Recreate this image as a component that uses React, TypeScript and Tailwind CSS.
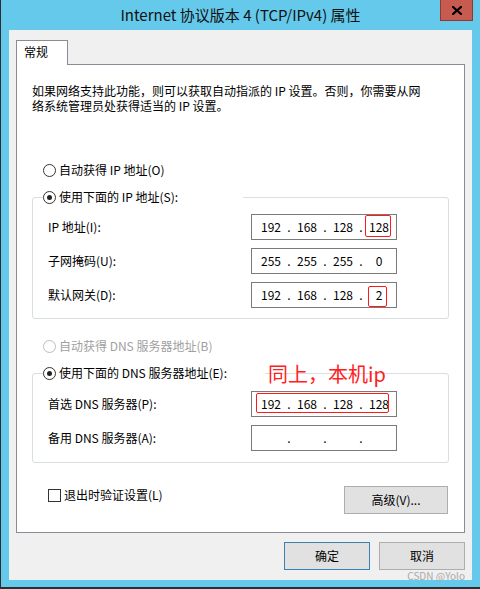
const FONT = { fontFamily: '"Noto Sans CJK SC", "Noto Sans", sans-serif' };

function Radio({ checked = false, disabled = false }: { checked?: boolean; disabled?: boolean }) {
  return (
    <span
      className={
        "w-[13px] h-[13px] rounded-full border bg-white flex items-center justify-center shrink-0 " +
        (disabled ? "border-[#bcbcbc]" : "border-[#333333]")
      }
    >
      {checked && <span className="w-[5px] h-[5px] rounded-full bg-[#222222]" />}
    </span>
  );
}

function RadioLabel({ text, checked, disabled }: { text: string; checked?: boolean; disabled?: boolean }) {
  return (
    <div className="flex items-center gap-[3px] h-[14px] text-[12px] leading-[14px]">
      <Radio checked={checked} disabled={disabled} />
      <span className={disabled ? "text-[#a0a0a0]" : "text-black"}>{text}</span>
    </div>
  );
}

function IpBox({ parts, children }: { parts: string[]; children?: React.ReactNode }) {
  return (
    <div className="relative w-[146px] h-[26px] border border-[#7a7a7a] bg-white flex items-center pl-[4px] text-[12px] leading-[14px]">
      {parts.map((p, i) => (
        <div key={i} className="flex items-center">
          {i > 0 && <span className="w-[6px] text-center">.</span>}
          <span className="w-[30px] text-center">{p}</span>
        </div>
      ))}
      {children}
    </div>
  );
}

function Row({ label, children }: { label: string; children: React.ReactNode }) {
  return (
    <>
      <div className="flex items-center text-[12px] leading-[14px]">{label}</div>
      {children}
    </>
  );
}

export default function App() {
  return (
    <div
      className="w-[480px] h-[589px] bg-[#64c9ea] border-l border-b-2 border-[#2e2e2e] flex flex-col text-black"
      style={FONT}
    >
      {/* title bar */}
      <div className="h-[30px] grid grid-cols-[1fr_auto_1fr] items-start">
        <div />
        <div className="text-[15px] leading-[30px] text-[#111]">Internet 协议版本 4 (TCP/IPv4) 属性</div>
        <div className="flex justify-end pr-[7px]">
          <div className="w-[33px] h-[21px] bg-[#c75b50] border border-[#8a3a33] border-t-0 flex items-center justify-center">
            <svg width="10" height="9" viewBox="0 0 10 9">
              <path d="M1 1 L9 8 M9 1 L1 8" stroke="#000" strokeWidth="2.2" strokeLinecap="square" />
            </svg>
          </div>
        </div>
      </div>

      {/* client */}
      <div className="ml-[8px] w-[463px] h-[550px] bg-[#f0f0f0] px-[7px] pt-[10px] flex flex-col">
        <div className="relative z-10 -mb-px w-[52px] h-[25px] bg-white border border-b-0 border-[#898c95] pl-[7px] pt-[3px] text-[12px] leading-[15px]">
          常规
        </div>

        <div className="relative bg-white border border-[#898c95] px-[15px] pb-[18px] flex flex-col">
          <div className="mt-[18px] text-[12px] leading-[15px]">
            <div>如果网络支持此功能，则可以获取自动指派的 IP 设置。否则，你需要从网</div>
            <div>络系统管理员处获得适当的 IP 设置。</div>
          </div>

          <div className="mt-[50px] pl-[11px]">
            <RadioLabel text="自动获得 IP 地址(O)" />
          </div>

          <fieldset className="mt-[13px] border border-[#d9dee3] rounded-[3px] pl-[10px] pt-[10px] pb-[10px]">
            <legend className="w-[200px] h-[14px]">
              <RadioLabel text="使用下面的 IP 地址(S):" checked />
            </legend>
            <div className="ml-[5px] grid grid-cols-[203px_146px] gap-y-[8px]">
              <Row label="IP 地址(I):">
                <IpBox parts={["192", "168", "128", "128"]}>
                  <div className="absolute left-[113px] top-0 w-[26px] h-[22px] border border-[#ff1a1a] rounded-[2px]" />
                </IpBox>
              </Row>
              <Row label="子网掩码(U):">
                <IpBox parts={["255", "255", "255", "0"]} />
              </Row>
              <Row label="默认网关(D):">
                <IpBox parts={["192", "168", "128", "2"]}>
                  <div className="absolute left-[116px] top-[3px] w-[19px] h-[21px] border border-[#ff1a1a] rounded-[2px]" />
                </IpBox>
              </Row>
            </div>
          </fieldset>

          <div className="mt-[20px] pl-[11px]">
            <RadioLabel text="自动获得 DNS 服务器地址(B)" disabled />
          </div>

          <fieldset className="mt-[13px] border border-[#d9dee3] rounded-[3px] pl-[10px] pt-[11px] pb-[11px]">
            <legend className="w-[222px] h-[14px]">
              <RadioLabel text="使用下面的 DNS 服务器地址(E):" checked />
            </legend>
            <div className="ml-[5px] grid grid-cols-[203px_146px] gap-y-[8px]">
              <Row label="首选 DNS 服务器(P):">
                <IpBox parts={["192", "168", "128", "128"]}>
                  <div className="absolute left-[4px] top-px w-[133px] h-[20px] border border-[#ff1a1a] rounded-[2px]" />
                </IpBox>
              </Row>
              <Row label="备用 DNS 服务器(A):">
                <IpBox parts={["", "", "", ""]} />
              </Row>
            </div>
          </fieldset>

          <div className="mt-[23px] pl-[16px] pr-px flex justify-between items-start">
            <div className="mt-[2px] flex items-center gap-[3px] text-[12px] leading-[14px]">
              <span className="w-[13px] h-[13px] border border-[#333333] bg-white" />
              <span>退出时验证设置(L)</span>
            </div>
            <button className="w-[104px] h-[28px] bg-[#e1e1e1] border border-[#adadad] text-[12px] leading-[14px]">
              高级(V)...
            </button>
          </div>

          <div className="absolute left-[251px] top-[299px] text-[20px] leading-[20px] text-[#ff2121] whitespace-nowrap">
            同上，本机ip
          </div>
        </div>

        <div className="mt-[9px] flex justify-end gap-[9px]">
          <button className="w-[86px] h-[28px] bg-[#e1e1e1] border border-[#3c7fb1] text-[12px] leading-[14px]">
            确定
          </button>
          <button className="w-[86px] h-[28px] bg-[#e1e1e1] border border-[#adadad] text-[12px] leading-[14px]">
            取消
          </button>
        </div>
        <div className="mt-px flex justify-end text-[10px] leading-[9px] text-[#a9a9a9]">CSDN @Yolo</div>
      </div>
    </div>
  );
}
